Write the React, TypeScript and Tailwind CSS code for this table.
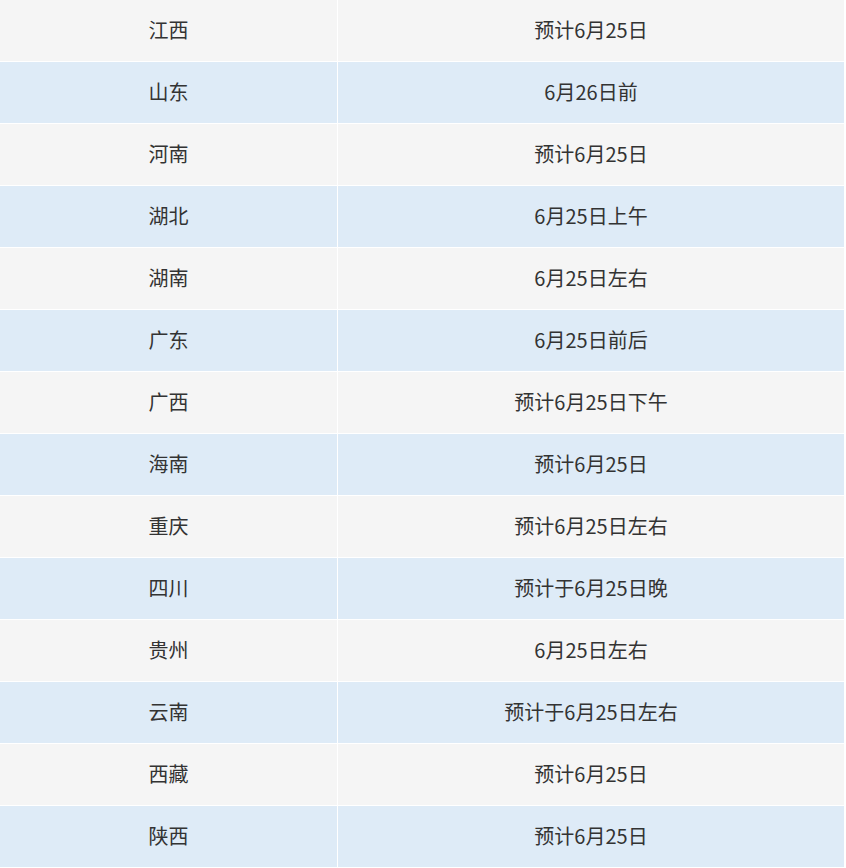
const rows: [string, string][] = [
  ['江西', '预计6月25日'],
  ['山东', '6月26日前'],
  ['河南', '预计6月25日'],
  ['湖北', '6月25日上午'],
  ['湖南', '6月25日左右'],
  ['广东', '6月25日前后'],
  ['广西', '预计6月25日下午'],
  ['海南', '预计6月25日'],
  ['重庆', '预计6月25日左右'],
  ['四川', '预计于6月25日晚'],
  ['贵州', '6月25日左右'],
  ['云南', '预计于6月25日左右'],
  ['西藏', '预计6月25日'],
  ['陕西', '预计6月25日'],
]

export default function App() {
  return (
    <div className="w-[846px] h-[868px] bg-white overflow-hidden">
      <div
        className="w-[844px] grid grid-cols-[337px_1fr] gap-px bg-white text-[20px] text-[#333]"
        style={{ fontFamily: '"Noto Sans CJK SC", "Noto Sans", sans-serif' }}
      >
        {rows.map(([prov, date], i) => {
          const bg = i % 2 === 0 ? 'bg-[#f5f5f5]' : 'bg-[#deebf7]'
          return [
            <div key={prov + 'a'} className={`${bg} h-[61px] pb-[2px] flex items-center justify-center`}>
              {prov}
            </div>,
            <div key={prov + 'b'} className={`${bg} h-[61px] pb-[2px] flex items-center justify-center`}>
              {date}
            </div>,
          ]
        })}
      </div>
    </div>
  )
}
